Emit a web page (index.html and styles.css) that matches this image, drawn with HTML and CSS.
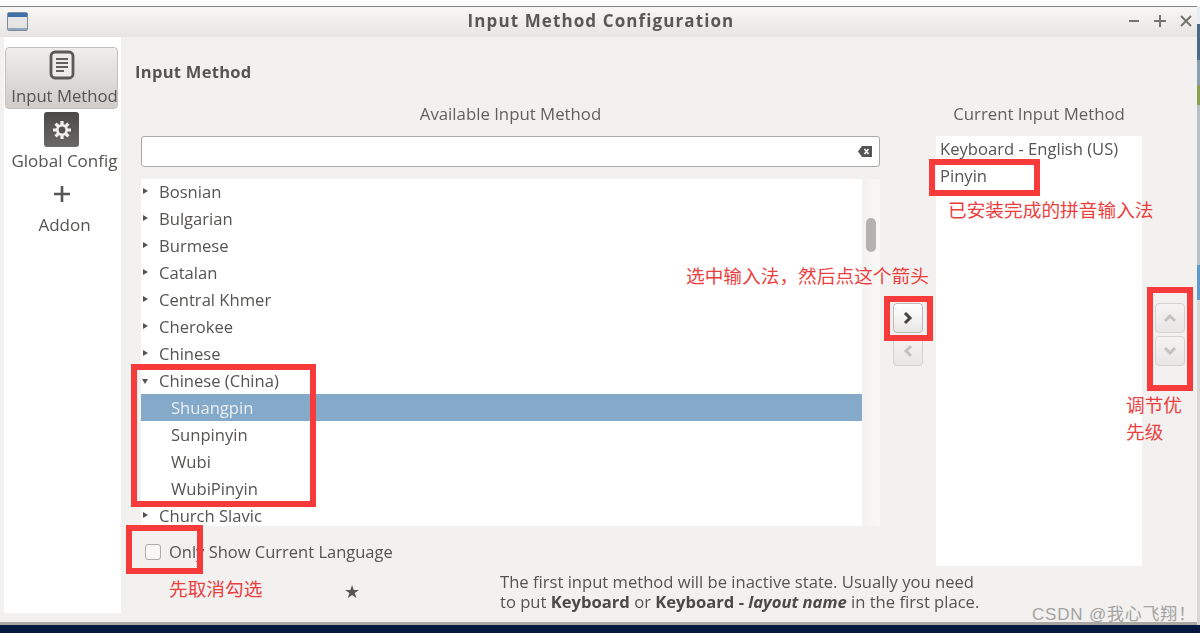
FILE: index.html
```html
<!DOCTYPE html>
<html lang="en">
<head>
<meta charset="utf-8">
<title>Input Method Configuration</title>
<link rel="stylesheet" href="styles.css">
</head>
<body>
<div class="screen">
  <div class="top-strip"></div>
  <div class="middle">
    <div class="window">
      <header class="titlebar">
        <svg class="app-icon" width="22" height="20" viewBox="0 0 22 20"><rect x="0.5" y="0.5" width="20" height="18" rx="1.5" fill="#e6e4e2" stroke="#7f8ca0"/><rect x="1" y="1" width="19" height="4" fill="#3f6fa8"/><rect x="1" y="16" width="19" height="2" fill="#8fa4bf"/></svg>
        <h1 class="window-title">Input Method Configuration</h1>
        <div class="win-controls">
          <svg width="12" height="12" viewBox="0 0 12 12"><path d="M1 6h10" stroke="#77746f" stroke-width="2"/></svg>
          <svg width="12" height="12" viewBox="0 0 12 12"><path d="M0 6h12M6 0v12" stroke="#77746f" stroke-width="2"/></svg>
          <svg width="12" height="12" viewBox="0 0 12 12"><path d="M1 1l10 10M11 1L1 11" stroke="#77746f" stroke-width="2"/></svg>
        </div>
      </header>
      <div class="content">
        <nav class="sidebar">
          <div class="nav-item active">
            <svg width="26" height="30" viewBox="0 0 26 30"><rect x="2" y="2" width="22" height="26" rx="4" fill="#eeeceb" stroke="#5a5a5a" stroke-width="2.8"/><path d="M7 9h12M7 13h12M7 17h12M7 21h8" stroke="#5f5f5f" stroke-width="2"/></svg>
            <span class="nav-label">Input Method</span>
          </div>
          <div class="nav-item">
            <span class="gear-tile"><svg width="20" height="20" viewBox="0 0 20 20"><g stroke="#f2f1f0" stroke-width="3.2"><path d="M10 1v18M1 10h18M3.6 3.6l12.8 12.8M16.4 3.6L3.6 16.4"/></g><circle cx="10" cy="10" r="6" fill="#f2f1f0"/><circle cx="10" cy="10" r="3.4" fill="#555"/></svg></span>
            <span class="nav-label">Global Config</span>
          </div>
          <div class="nav-item addon">
            <svg width="18" height="18" viewBox="0 0 18 18"><path d="M1 9h16M9 1v16" stroke="#555" stroke-width="2.6"/></svg>
            <span class="nav-label">Addon</span>
          </div>
        </nav>
        <main class="main">
          <h2 class="page-title">Input Method</h2>
          <div class="picker">
            <div class="col-label">Available Input Method</div>
            <div></div>
            <div class="col-label">Current Input Method</div>
            <div></div>
            <div class="available">
              <div class="search"><svg width="14" height="11" viewBox="0 0 14 11"><path d="M4 0h10v11H4L0 5.500z" fill="#555"/><path d="M6.500 3l4 5M10.500 3l-4 5" stroke="#fff" stroke-width="1.500"/></svg></div>
              <div class="tree-wrap">
                <ul class="tree">
                  <li class="row"><i class="tri"></i>Bosnian</li>
                  <li class="row"><i class="tri"></i>Bulgarian</li>
                  <li class="row"><i class="tri"></i>Burmese</li>
                  <li class="row"><i class="tri"></i>Catalan</li>
                  <li class="row"><i class="tri"></i>Central Khmer</li>
                  <li class="row"><i class="tri"></i>Cherokee</li>
                  <li class="row"><i class="tri"></i>Chinese</li>
                  <li class="row"><i class="tri open"></i>Chinese (China)</li>
                  <li class="row child selected">Shuangpin</li>
                  <li class="row child">Sunpinyin</li>
                  <li class="row child">Wubi</li>
                  <li class="row child">WubiPinyin</li>
                  <li class="row"><i class="tri"></i>Church Slavic</li>
                </ul>
                <div class="scrollbar"><div class="thumb"></div></div>
              </div>
              <label class="only-current"><span class="checkbox"></span>Only Show Current Language</label>
            </div>
            <div class="arrow-col">
              <button class="btn"><svg width="12" height="14" viewBox="0 0 12 14"><path d="M3 2l5 5-5 5" fill="none" stroke="#444" stroke-width="3"/></svg></button>
              <button class="btn"><svg width="12" height="14" viewBox="0 0 12 14"><path d="M9 2L4 7l5 5" fill="none" stroke="#c4c2bf" stroke-width="3"/></svg></button>
            </div>
            <ul class="current">
              <li>Keyboard - English (US)</li>
              <li>Pinyin</li>
            </ul>
            <div class="arrow-col">
              <button class="btn"><svg width="14" height="12" viewBox="0 0 14 12"><path d="M2 9l5-5 5 5" fill="none" stroke="#c4c2bf" stroke-width="3"/></svg></button>
              <button class="btn"><svg width="14" height="12" viewBox="0 0 14 12"><path d="M2 3l5 5 5-5" fill="none" stroke="#c4c2bf" stroke-width="3"/></svg></button>
            </div>
          </div>
          <footer class="foot">
            <span class="star">★</span>
            <p class="note">The first input method will be inactive state. Usually you need<br>to put <b>Keyboard</b> or <b>Keyboard - <i>layout name</i></b> in the first place.</p>
          </footer>
        </main>
      </div>
    </div>
    <div class="right-strip"></div>
  </div>
  <div class="bottom-strip"></div>

  <div class="mark box-pinyin"></div>
  <div class="mark box-arrow"></div>
  <div class="mark box-updown"></div>
  <div class="mark box-china"></div>
  <div class="mark box-check"></div>
  <div class="note-red red-installed">已安装完成的拼音输入法</div>
  <div class="note-red red-select">选中输入法，然后点这个箭头</div>
  <div class="note-red red-priority">调节优<br>先级</div>
  <div class="note-red red-uncheck">先取消勾选</div>
  <div class="watermark">CSDN @我心飞翔！</div>
</div>
</body>
</html>
```
FILE: styles.css
```css
* { box-sizing: border-box; }
html, body { margin: 0; padding: 0; }
body { font-family: "Open Sans", "Noto Sans", sans-serif; color: #565452; }
ul { list-style: none; margin: 0; padding: 0; }
.screen { position: relative; width: 1200px; height: 633px; overflow: hidden; background: #fff; display: flex; flex-direction: column; }
.top-strip { height: 6px; background: #fdfdfd; }
.middle { display: flex; height: 619px; }
.window { width: 1197px; display: flex; flex-direction: column; background: #f2f1f0; border-top: 1px solid #85837f; border-bottom: 3px solid #a9a8a5; filter: blur(0.35px); }
.right-strip { flex: 1; background: linear-gradient(#e8eef2 0 18px, #4a6a85 18px 54px, #8aa0b0 54px 79px, #8fa050 79px 99px, #b9c0c6 99px 259px, #5f9ac8 259px 294px, #d8d8d8 294px); }
.bottom-strip { flex: 1; background: #04173f; }

.titlebar { height: 30px; flex: none; display: flex; align-items: center; padding: 0 5px 3px 7px; background: linear-gradient(#f8f7f6, #e6e5e3); position: relative; }
.app-icon { flex: none; margin-top: 3px; }
.window-title { flex: 1; margin: 0; text-align: center; font-size: 17px; font-weight: 700; color: #5a5855; letter-spacing: 1.1px; padding-left: 45px; padding-right: 0; }
.win-controls { display: flex; gap: 14px; flex: none; }

.content { flex: 1; display: flex; min-height: 0; }
.sidebar { width: 117px; margin-left: 4px; background: #fff; display: flex; flex-direction: column; align-items: stretch; flex: none; margin-bottom: 9px; padding-top: 10px; }
.nav-item { width: 113px; margin-left: 1px; height: 62px; display: flex; flex-direction: column; align-items: center; justify-content: flex-start; font-size: 17px; line-height: 20px; white-space: nowrap; color: #565452; }
.nav-label { position: relative; left: 3px; }
.nav-item.active { background: linear-gradient(#efeeed, #cfccc9); border: 1px solid #c3c1bd; border-radius: 4px; padding-top: 2px; height: 62px; gap: 6px; font-size: 16.700px; }
.nav-item .gear-tile { width: 35px; height: 35px; margin: 3px 0 4px; background: linear-gradient(#4b4a49, #6a6968); border-radius: 3px; display: flex; align-items: center; justify-content: center; flex: none; }
.nav-item.addon { margin-top: 10px; gap: 12px; height: 60px; padding-top: 4px; }

.main { flex: 1; min-width: 0; padding: 25px 0 0 20px; display: flex; flex-direction: column; }
.page-title { margin: 0 0 0 -6px; font-size: 16.500px; line-height: 20px; font-weight: 700; color: #565452; letter-spacing: 0.3px; }
.picker { display: grid; grid-template-columns: 739px 30px 206px 30px; column-gap: 13px; grid-template-rows: 22px 430px; row-gap: 11px; margin-top: 21px; }
.col-label { text-align: center; font-size: 16.800px; line-height: 22px; color: #625f5d; white-space: nowrap; }
.available { display: flex; flex-direction: column; min-height: 0; }
.search { height: 31px; flex: none; background: #fff; border: 1px solid #a9a8a5; border-radius: 3px; display: flex; align-items: center; justify-content: flex-end; padding-right: 7px; }
.tree-wrap { margin-top: 12px; height: 347px; flex: none; display: flex; overflow: hidden; }
.tree { width: 721px; background: #fff; overflow: hidden; margin-top: -1px; }
.row { height: 27px; display: flex; align-items: center; padding-left: 18px; position: relative; font-size: 16.600px; color: #565452; }
.row.child { padding-left: 30px; }
.row.selected { background: #85a9c9; color: #e9eff5; }
.tri { position: absolute; left: 2px; top: 10px; width: 0; height: 0; border-left: 5px solid #565452; border-top: 3.500px solid transparent; border-bottom: 3.500px solid transparent; }
.tri.open { left: 1px; top: 12px; border-top: 5px solid #565452; border-left: 3.500px solid transparent; border-right: 3.500px solid transparent; border-bottom: 0; }
.scrollbar { flex: 1; background: linear-gradient(90deg, #f3f2f1, #f8f8f7); padding: 39px 4px 0; }
.thumb { height: 34px; background: #b5b3b0; border-radius: 5px; }
.only-current { display: flex; align-items: center; height: 26px; margin-top: 12px; padding-left: 4px; font-size: 16.500px; color: #565452; white-space: nowrap; }
.checkbox { width: 16px; height: 16px; background: #f8f7f6; border: 1px solid #aeaca9; border-radius: 3px; margin-right: 8px; flex: none; position: relative; top: 1px; }
.arrow-col { display: flex; flex-direction: column; gap: 3px; padding-top: 167px; }
.btn { width: 30px; height: 30px; padding: 0; border: 1px solid #d5d3d0; border-radius: 4px; background: linear-gradient(#f4f3f2, #e8e7e5); display: flex; align-items: center; justify-content: center; }
.arrow-col:nth-child(6) .btn:first-child { background: linear-gradient(#fff, #e8e7e5); border-color: #bcbab6; }
.current { background: #fff; padding-left: 4px; font-size: 16.600px; margin: 0; }
.current li { height: 27px; display: flex; align-items: center; white-space: nowrap; color: #565452; position: relative; top: -1px; }
.foot { position: relative; display: flex; padding-left: 359px; margin-top: 6px; }
.star { position: absolute; left: 203px; top: 9px; font-size: 18px; line-height: 20px; color: #555; }
.note { margin: 0; font-size: 16.600px; line-height: 20px; color: #565452; white-space: nowrap; }
.note b { font-weight: 700; color: #4c4a48; }

.mark { position: absolute; border: 6px solid #f73a3a; }
.box-pinyin { left: 929px; top: 159px; width: 111px; height: 37px; }
.box-arrow { left: 884px; top: 296px; width: 49px; height: 45px; }
.box-updown { left: 1147px; top: 287px; width: 46px; height: 104px; }
.box-china { left: 131px; top: 364px; width: 185px; height: 143px; }
.box-check { left: 126px; top: 525px; width: 77px; height: 49px; }
.note-red { position: absolute; font-family: "Noto Sans CJK SC", sans-serif; font-size: 18.700px; line-height: 27px; color: #ea3f3f; white-space: nowrap; }
.red-installed { left: 948px; top: 195px; }
.red-select { left: 686px; top: 261px; }
.red-priority { left: 1126px; top: 390px; }
.red-uncheck { left: 169px; top: 574px; }
.watermark { position: absolute; left: 1032px; top: 605px; font-family: "Liberation Sans", "Noto Sans CJK SC", sans-serif; font-size: 17px; letter-spacing: 0.8px; line-height: 20px; color: #a3a3a1; white-space: nowrap; }
```
